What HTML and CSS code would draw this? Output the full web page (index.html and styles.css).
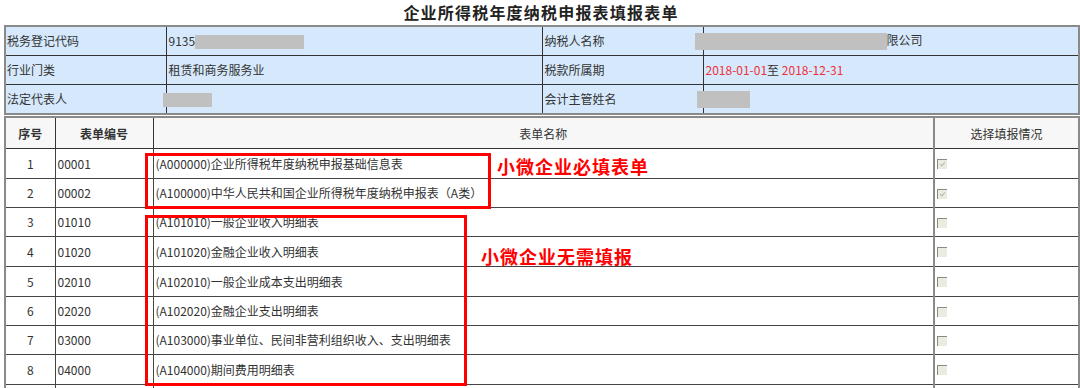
FILE: index.html
```html
<!DOCTYPE html>
<html lang="zh-CN">
<head>
<meta charset="utf-8">
<title>企业所得税年度纳税申报表填报表单</title>
<link rel="stylesheet" href="styles.css">
</head>
<body>
<div class="page">
  <h1 class="title">企业所得税年度纳税申报表填报表单</h1>
  <table class="info">
    <colgroup><col class="c1"><col class="c2"><col class="c3"><col class="c4"></colgroup>
    <tr>
      <td>税务登记代码</td>
      <td>9135<span class="mask m-code"></span></td>
      <td>纳税人名称</td>
      <td><span class="mask m-name"></span>限公司</td>
    </tr>
    <tr>
      <td>行业门类</td>
      <td>租赁和商务服务业</td>
      <td>税款所属期</td>
      <td><span class="red">2018-01-01</span>至 <span class="red">2018-12-31</span></td>
    </tr>
    <tr>
      <td>法定代表人</td>
      <td><span class="mask m-rep"></span></td>
      <td>会计主管姓名</td>
      <td><span class="mask m-acc"></span></td>
    </tr>
  </table>
  <div class="list-wrap">
    <table class="list">
      <colgroup><col class="l1"><col class="l2"><col class="l3"><col class="l4"></colgroup>
      <tr class="head">
        <th class="strong">序号</th>
        <th class="strong">表单编号</th>
        <th>表单名称</th>
        <th class="sel">选择填报情况</th>
      </tr>
      <tr><td class="num">1</td><td>00001</td><td>(A000000)企业所得税年度纳税申报基础信息表</td><td class="sel"><span class="cb on"></span></td></tr>
      <tr><td class="num">2</td><td>00002</td><td>(A100000)中华人民共和国企业所得税年度纳税申报表（A类）</td><td class="sel"><span class="cb on"></span></td></tr>
      <tr><td class="num">3</td><td>01010</td><td>(A101010)一般企业收入明细表</td><td class="sel"><span class="cb"></span></td></tr>
      <tr><td class="num">4</td><td>01020</td><td>(A101020)金融企业收入明细表</td><td class="sel"><span class="cb"></span></td></tr>
      <tr><td class="num">5</td><td>02010</td><td>(A102010)一般企业成本支出明细表</td><td class="sel"><span class="cb"></span></td></tr>
      <tr><td class="num">6</td><td>02020</td><td>(A102020)金融企业支出明细表</td><td class="sel"><span class="cb"></span></td></tr>
      <tr><td class="num">7</td><td>03000</td><td>(A103000)事业单位、民间非营利组织收入、支出明细表</td><td class="sel"><span class="cb"></span></td></tr>
      <tr><td class="num">8</td><td>04000</td><td>(A104000)期间费用明细表</td><td class="sel"><span class="cb"></span></td></tr>
      <tr class="tail"><td></td><td></td><td></td><td class="sel"></td></tr>
    </table>
    <div class="mark mark-a"></div>
    <div class="mark mark-b"></div>
    <div class="note note-a">小微企业必填表单</div>
    <div class="note note-b">小微企业无需填报</div>
  </div>
</div>
</body>
</html>
```
FILE: styles.css
```css
html, body {
  margin: 0;
  padding: 0;
  background: #fff;
}
body {
  font-family: "Noto Sans CJK SC", "Microsoft YaHei", sans-serif;
  font-size: 12px;
  color: #333;
}
.page {
  width: 1074px;
  padding: 0 2px 0 4px;
}
.title {
  margin: 0;
  height: 25px;
  line-height: 25px;
  font-size: 16px;
  font-weight: bold;
  letter-spacing: 1.2px;
  text-align: center;
  color: #222;
}
.info {
  width: 1074px;
  border-collapse: collapse;
  table-layout: fixed;
  background: #d6e9fc;
  border: 2px solid #8a8a8a;
}
.info .c1 { width: 161px; }
.info .c2 { width: 376px; }
.info .c3 { width: 161px; }
.info .c4 { width: 376px; }
.info td {
  border: 1px solid #333;
  height: 28px;
  padding: 0 2px;
  white-space: nowrap;
  line-height: 16px;
}
.info td:first-child { padding-left: 1px; }
.red { color: #f0303a; }
.mask {
  display: inline-block;
  background: #c0c0c0;
  vertical-align: middle;
}
.m-code { width: 109px; height: 14px; margin-left: 0; }
.m-name { width: 192px; height: 17px; margin-left: -11px; }
.m-rep { width: 49px; height: 14px; margin-left: -6px; }
.m-acc { width: 53px; height: 17px; margin-left: -9px; }

.list-wrap {
  position: relative;
  margin-top: 1px;
}
.list {
  width: 1074px;
  border-collapse: collapse;
  table-layout: fixed;
  border: 2px solid #8a8a8a;
}
.list .l1 { width: 50px; }
.list .l2 { width: 98px; }
.list .l3 { width: 781px; }
.list .l4 { width: 145px; }
.list th {
  background: #f7f7f7;
  height: 30px;
  font-weight: normal;
  font-size: 12px;
  color: #333;
  border: 1px solid #333;
  padding: 0;
}
.list th.strong { font-weight: bold; }
.list td {
  height: 28px;
  border: 1px solid #444;
  padding: 0 2px;
  white-space: nowrap;
  line-height: 16px;
}
.list tr:nth-child(4n+1) td,
.list tr:nth-child(4n+2) td { height: 29px; }
.list td.num { text-align: center; padding: 0; }
.list .sel { border-left: 2px solid #8a8a8a; }
.list td.sel { padding-left: 2px; }
.cb {
  display: inline-block;
  width: 9px;
  height: 9px;
  vertical-align: middle;
  background: #ecebe0;
  border-top: 1px solid #8a8a80;
  border-left: 1px solid #8a8a80;
  position: relative;
  top: -1px;
}
.cb.on::after {
  content: "";
  position: absolute;
  left: 3px;
  top: 1px;
  width: 2px;
  height: 4px;
  border-right: 1px solid #b8b8b0;
  border-bottom: 1px solid #b8b8b0;
  transform: rotate(40deg);
}
.mark {
  position: absolute;
  box-sizing: border-box;
  border: 3px solid #f00;
}
.mark-a { left: 141px; top: 37px; width: 346px; height: 56px; }
.mark-b { left: 141px; top: 99px; width: 322px; height: 171px; }
.note {
  position: absolute;
  color: #f00;
  font-weight: bold;
  font-size: 18px;
  line-height: 24px;
  letter-spacing: 1px;
  white-space: nowrap;
}
.note-a { left: 493px; top: 38px; }
.note-b { left: 477px; top: 128px; }
```
